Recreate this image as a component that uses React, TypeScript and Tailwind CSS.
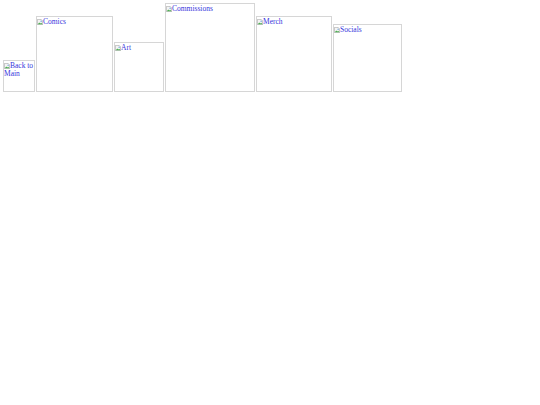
import React from "react";

type Tile = { label: string; w: number; h: number };

const tiles: Tile[] = [
  { label: "Back to Main", w: 32, h: 32 },
  { label: "Comics", w: 77, h: 76 },
  { label: "Art", w: 50, h: 50 },
  { label: "Commissions", w: 90, h: 89 },
  { label: "Merch", w: 76, h: 76 },
  { label: "Socials", w: 69, h: 68 },
];

function BrokenIcon() {
  return (
    <svg width="6" height="6" viewBox="0 0 16 16" className="inline-block align-[-1px]">
      <path d="M1 1h10l4 4v10H1z" fill="#f4f4f4" stroke="#9a9a9a" strokeWidth="1.5" />
      <path d="M2 14l4-5 3 3 2-2 4 4z" fill="#4caf50" />
      <circle cx="11" cy="6" r="1.8" fill="#6aa0d8" />
    </svg>
  );
}

export default function App() {
  return (
    <div className="min-h-[405px] w-[540px] bg-white">
      <div className="flex items-end gap-[1px] pl-[3px] pt-[3px]">
        {tiles.map((t) => (
          <a
            key={t.label}
            href="#"
            className="block shrink-0 overflow-hidden border border-[#d6d6d6] box-border pt-[1px] text-[7.5px] leading-[8px] text-[#3535dc] [font-family:'Liberation_Serif',serif]"
            style={{ width: t.w, height: t.h }}
          >
            <BrokenIcon />
            {t.label}
          </a>
        ))}
      </div>
    </div>
  );
}
